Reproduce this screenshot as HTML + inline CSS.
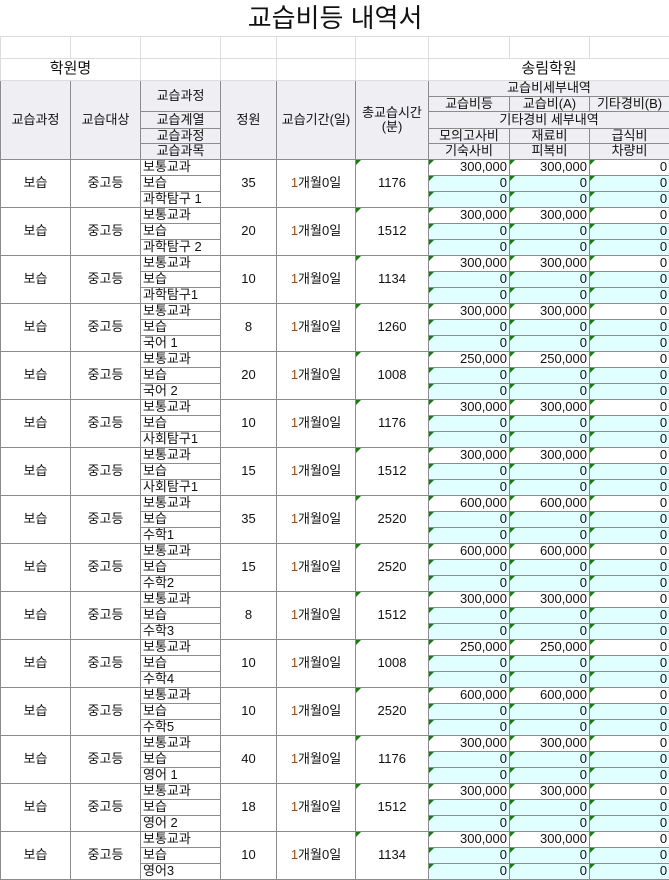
<!DOCTYPE html>
<html><head><meta charset="utf-8">
<style>
*{margin:0;padding:0;box-sizing:border-box}
body{width:669px;height:879px;overflow:hidden;background:#fff;font-family:"Liberation Sans","Noto Sans CJK KR",sans-serif;font-size:13px;color:#111}
table{border-collapse:collapse;table-layout:fixed;width:669px}
td{border:1px solid #8c8c8c;padding:0 2px;white-space:nowrap;overflow:hidden;line-height:14px;text-align:center;position:relative}
tr{height:16px}
.t td{border:1px solid #dcdcdc}
.title{font-size:26px;height:35px;border:none!important}
.h td{background:#eeeef3}
.s{text-align:left;padding-left:2px}
.n{text-align:right;padding-right:2px}
.c{background:#e0ffff}
.g::before{content:"";position:absolute;left:0;top:0;border-top:5px solid #1a7a1a;border-right:5px solid transparent}
.o{color:#9a4a10}
</style></head><body>
<table>
<colgroup><col style="width:70px"><col style="width:70px"><col style="width:80px"><col style="width:56px"><col style="width:79px"><col style="width:73px"><col style="width:81px"><col style="width:80px"><col style="width:80px"></colgroup>
<tr class="t" style="height:36px"><td colspan="9" class="title">교습비등 내역서</td></tr>
<tr class="t" style="height:22px"><td></td><td></td><td></td><td></td><td></td><td></td><td></td><td></td><td></td></tr>
<tr class="t" style="height:22px"><td colspan="2" style="font-size:15px">학원명</td><td></td><td></td><td></td><td></td><td colspan="3" style="font-size:15px">송림학원</td></tr>
<tr class="h"><td rowspan="5">교습과정</td><td rowspan="5">교습대상</td><td rowspan="2">교습과정</td><td rowspan="5">정원</td><td rowspan="5">교습기간(일)</td><td rowspan="5">총교습시간<br>(분)</td><td colspan="3">교습비세부내역</td></tr>
<tr class="h" style="height:15px"><td>교습비등</td><td>교습비(A)</td><td>기타경비(B)</td></tr>
<tr class="h" style="height:17px"><td>교습계열</td><td colspan="3">기타경비 세부내역</td></tr>
<tr class="h" style="height:15px"><td>교습과정</td><td>모의고사비</td><td>재료비</td><td>급식비</td></tr>
<tr class="h"><td>교습과목</td><td>기숙사비</td><td>피복비</td><td>차량비</td></tr>

<tr><td rowspan="3">보습</td><td rowspan="3">중고등</td><td class="s">보통교과</td><td rowspan="3">35</td><td rowspan="3"><span class="o">1</span>개월0일</td><td rowspan="3" class="g">1176</td><td class="n g">300,000</td><td class="n g">300,000</td><td class="n g">0</td></tr>
<tr><td class="s">보습</td><td class="n g c">0</td><td class="n g c">0</td><td class="n g c">0</td></tr>
<tr><td class="s">과학탐구 1</td><td class="n g c">0</td><td class="n g c">0</td><td class="n g c">0</td></tr>

<tr><td rowspan="3">보습</td><td rowspan="3">중고등</td><td class="s">보통교과</td><td rowspan="3">20</td><td rowspan="3"><span class="o">1</span>개월0일</td><td rowspan="3" class="g">1512</td><td class="n g">300,000</td><td class="n g">300,000</td><td class="n g">0</td></tr>
<tr><td class="s">보습</td><td class="n g c">0</td><td class="n g c">0</td><td class="n g c">0</td></tr>
<tr><td class="s">과학탐구 2</td><td class="n g c">0</td><td class="n g c">0</td><td class="n g c">0</td></tr>

<tr><td rowspan="3">보습</td><td rowspan="3">중고등</td><td class="s">보통교과</td><td rowspan="3">10</td><td rowspan="3"><span class="o">1</span>개월0일</td><td rowspan="3" class="g">1134</td><td class="n g">300,000</td><td class="n g">300,000</td><td class="n g">0</td></tr>
<tr><td class="s">보습</td><td class="n g c">0</td><td class="n g c">0</td><td class="n g c">0</td></tr>
<tr><td class="s">과학탐구1</td><td class="n g c">0</td><td class="n g c">0</td><td class="n g c">0</td></tr>

<tr><td rowspan="3">보습</td><td rowspan="3">중고등</td><td class="s">보통교과</td><td rowspan="3">8</td><td rowspan="3"><span class="o">1</span>개월0일</td><td rowspan="3" class="g">1260</td><td class="n g">300,000</td><td class="n g">300,000</td><td class="n g">0</td></tr>
<tr><td class="s">보습</td><td class="n g c">0</td><td class="n g c">0</td><td class="n g c">0</td></tr>
<tr><td class="s">국어 1</td><td class="n g c">0</td><td class="n g c">0</td><td class="n g c">0</td></tr>

<tr><td rowspan="3">보습</td><td rowspan="3">중고등</td><td class="s">보통교과</td><td rowspan="3">20</td><td rowspan="3"><span class="o">1</span>개월0일</td><td rowspan="3" class="g">1008</td><td class="n g">250,000</td><td class="n g">250,000</td><td class="n g">0</td></tr>
<tr><td class="s">보습</td><td class="n g c">0</td><td class="n g c">0</td><td class="n g c">0</td></tr>
<tr><td class="s">국어 2</td><td class="n g c">0</td><td class="n g c">0</td><td class="n g c">0</td></tr>

<tr><td rowspan="3">보습</td><td rowspan="3">중고등</td><td class="s">보통교과</td><td rowspan="3">10</td><td rowspan="3"><span class="o">1</span>개월0일</td><td rowspan="3" class="g">1176</td><td class="n g">300,000</td><td class="n g">300,000</td><td class="n g">0</td></tr>
<tr><td class="s">보습</td><td class="n g c">0</td><td class="n g c">0</td><td class="n g c">0</td></tr>
<tr><td class="s">사회탐구1</td><td class="n g c">0</td><td class="n g c">0</td><td class="n g c">0</td></tr>

<tr><td rowspan="3">보습</td><td rowspan="3">중고등</td><td class="s">보통교과</td><td rowspan="3">15</td><td rowspan="3"><span class="o">1</span>개월0일</td><td rowspan="3" class="g">1512</td><td class="n g">300,000</td><td class="n g">300,000</td><td class="n g">0</td></tr>
<tr><td class="s">보습</td><td class="n g c">0</td><td class="n g c">0</td><td class="n g c">0</td></tr>
<tr><td class="s">사회탐구1</td><td class="n g c">0</td><td class="n g c">0</td><td class="n g c">0</td></tr>

<tr><td rowspan="3">보습</td><td rowspan="3">중고등</td><td class="s">보통교과</td><td rowspan="3">35</td><td rowspan="3"><span class="o">1</span>개월0일</td><td rowspan="3" class="g">2520</td><td class="n g">600,000</td><td class="n g">600,000</td><td class="n g">0</td></tr>
<tr><td class="s">보습</td><td class="n g c">0</td><td class="n g c">0</td><td class="n g c">0</td></tr>
<tr><td class="s">수학1</td><td class="n g c">0</td><td class="n g c">0</td><td class="n g c">0</td></tr>

<tr><td rowspan="3">보습</td><td rowspan="3">중고등</td><td class="s">보통교과</td><td rowspan="3">15</td><td rowspan="3"><span class="o">1</span>개월0일</td><td rowspan="3" class="g">2520</td><td class="n g">600,000</td><td class="n g">600,000</td><td class="n g">0</td></tr>
<tr><td class="s">보습</td><td class="n g c">0</td><td class="n g c">0</td><td class="n g c">0</td></tr>
<tr><td class="s">수학2</td><td class="n g c">0</td><td class="n g c">0</td><td class="n g c">0</td></tr>

<tr><td rowspan="3">보습</td><td rowspan="3">중고등</td><td class="s">보통교과</td><td rowspan="3">8</td><td rowspan="3"><span class="o">1</span>개월0일</td><td rowspan="3" class="g">1512</td><td class="n g">300,000</td><td class="n g">300,000</td><td class="n g">0</td></tr>
<tr><td class="s">보습</td><td class="n g c">0</td><td class="n g c">0</td><td class="n g c">0</td></tr>
<tr><td class="s">수학3</td><td class="n g c">0</td><td class="n g c">0</td><td class="n g c">0</td></tr>

<tr><td rowspan="3">보습</td><td rowspan="3">중고등</td><td class="s">보통교과</td><td rowspan="3">10</td><td rowspan="3"><span class="o">1</span>개월0일</td><td rowspan="3" class="g">1008</td><td class="n g">250,000</td><td class="n g">250,000</td><td class="n g">0</td></tr>
<tr><td class="s">보습</td><td class="n g c">0</td><td class="n g c">0</td><td class="n g c">0</td></tr>
<tr><td class="s">수학4</td><td class="n g c">0</td><td class="n g c">0</td><td class="n g c">0</td></tr>

<tr><td rowspan="3">보습</td><td rowspan="3">중고등</td><td class="s">보통교과</td><td rowspan="3">10</td><td rowspan="3"><span class="o">1</span>개월0일</td><td rowspan="3" class="g">2520</td><td class="n g">600,000</td><td class="n g">600,000</td><td class="n g">0</td></tr>
<tr><td class="s">보습</td><td class="n g c">0</td><td class="n g c">0</td><td class="n g c">0</td></tr>
<tr><td class="s">수학5</td><td class="n g c">0</td><td class="n g c">0</td><td class="n g c">0</td></tr>

<tr><td rowspan="3">보습</td><td rowspan="3">중고등</td><td class="s">보통교과</td><td rowspan="3">40</td><td rowspan="3"><span class="o">1</span>개월0일</td><td rowspan="3" class="g">1176</td><td class="n g">300,000</td><td class="n g">300,000</td><td class="n g">0</td></tr>
<tr><td class="s">보습</td><td class="n g c">0</td><td class="n g c">0</td><td class="n g c">0</td></tr>
<tr><td class="s">영어 1</td><td class="n g c">0</td><td class="n g c">0</td><td class="n g c">0</td></tr>

<tr><td rowspan="3">보습</td><td rowspan="3">중고등</td><td class="s">보통교과</td><td rowspan="3">18</td><td rowspan="3"><span class="o">1</span>개월0일</td><td rowspan="3" class="g">1512</td><td class="n g">300,000</td><td class="n g">300,000</td><td class="n g">0</td></tr>
<tr><td class="s">보습</td><td class="n g c">0</td><td class="n g c">0</td><td class="n g c">0</td></tr>
<tr><td class="s">영어 2</td><td class="n g c">0</td><td class="n g c">0</td><td class="n g c">0</td></tr>

<tr><td rowspan="3">보습</td><td rowspan="3">중고등</td><td class="s">보통교과</td><td rowspan="3">10</td><td rowspan="3"><span class="o">1</span>개월0일</td><td rowspan="3" class="g">1134</td><td class="n g">300,000</td><td class="n g">300,000</td><td class="n g">0</td></tr>
<tr><td class="s">보습</td><td class="n g c">0</td><td class="n g c">0</td><td class="n g c">0</td></tr>
<tr><td class="s">영어3</td><td class="n g c">0</td><td class="n g c">0</td><td class="n g c">0</td></tr>
</table>
</body></html>
